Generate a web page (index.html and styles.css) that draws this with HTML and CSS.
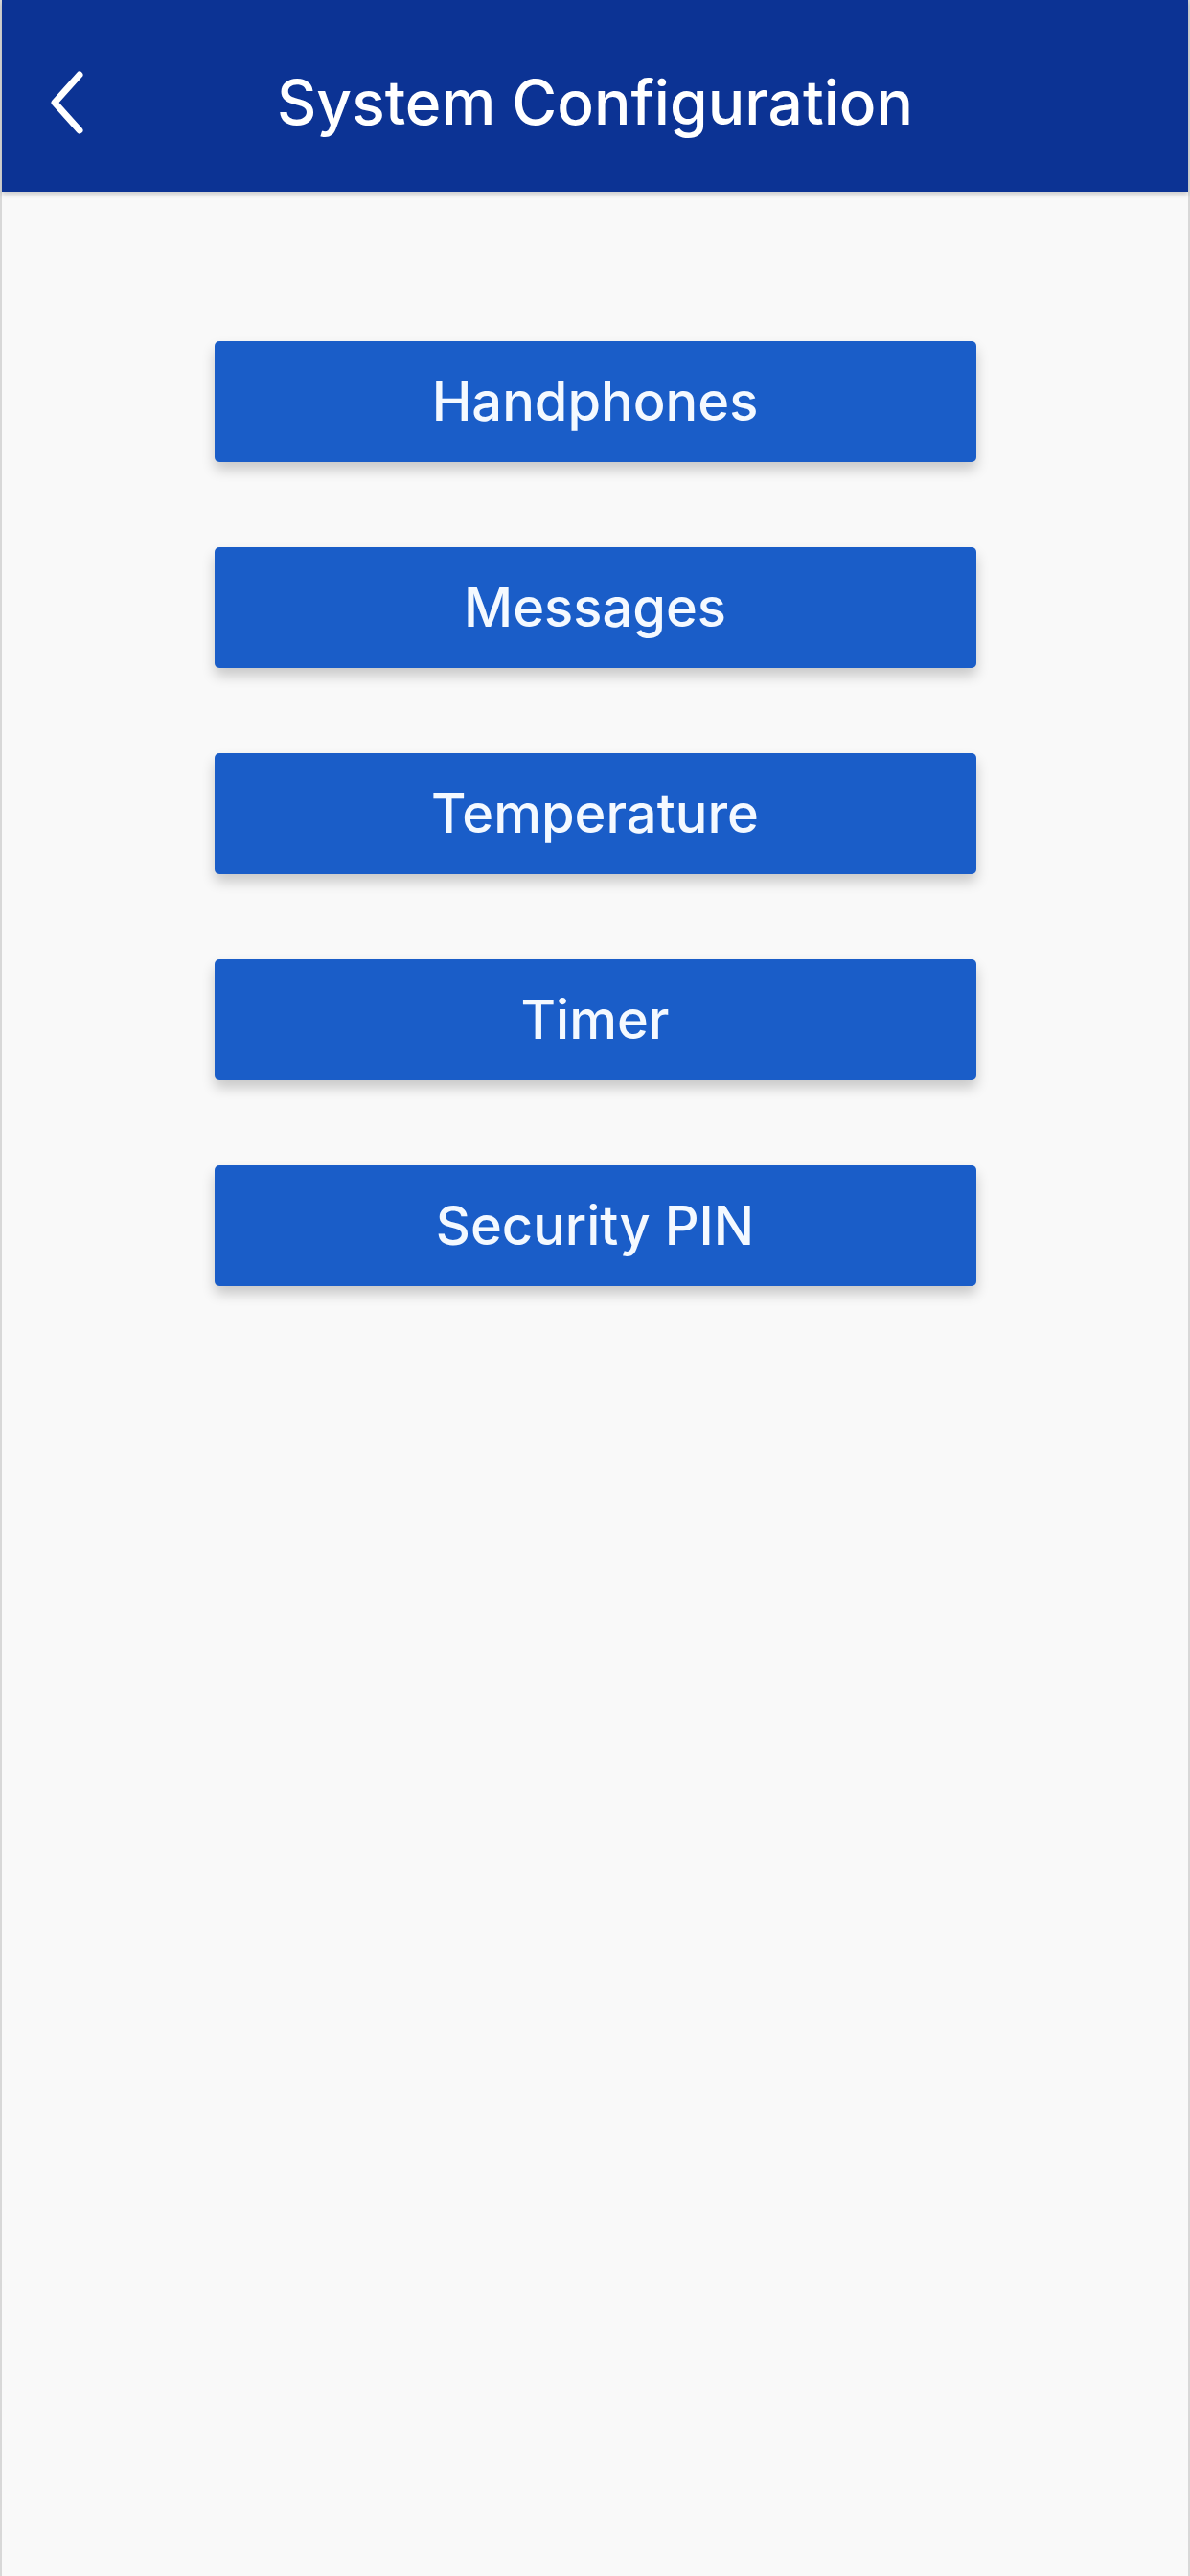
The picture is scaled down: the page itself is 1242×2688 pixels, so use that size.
FILE: index.html
```html
<!DOCTYPE html>
<html lang="en">

<head>
    <meta charset="UTF-8">
    <meta name="viewport" content="width=device-width, initial-scale=1.0">
    <title>System Configuration</title>
    <link rel="stylesheet" href="styles.css">
</head>

<body>
    <div class="screen">
        <header class="topbar">
            <button class="back" aria-label="Back">
                <svg width="40" height="70" viewBox="0 0 40 70">
                    <path d="M33 6 L7 35 L33 64" fill="none" stroke="#fff" stroke-width="7" stroke-linecap="round" stroke-linejoin="round" />
                </svg>
            </button>
            <h1 class="title">System Configuration</h1>
        </header>

        <nav class="menu">
            <button class="menu-btn">Handphones</button>
            <button class="menu-btn">Messages</button>
            <button class="menu-btn">Temperature</button>
            <button class="menu-btn">Timer</button>
            <button class="menu-btn">Security PIN</button>
        </nav>
    </div>
</body>

</html>
```

FILE: styles.css
```css
body {
    margin: 0;
    padding: 0;
    font-family: Inter, Roboto, "Noto Sans", sans-serif;
    background-color: #f9f9f9;
}

.screen {
    min-height: 2688px;
    box-sizing: border-box;
    border-left: 2px solid #d8d8d8;
    border-right: 2px solid #d8d8d8;
    background-color: #f9f9f9;
}

.topbar {
    position: relative;
    height: 200px;
    box-sizing: border-box;
    padding-top: 12px;
    display: flex;
    align-items: center;
    justify-content: center;
    background-color: #0c3394;
    box-shadow: 0 3px 5px rgba(0, 0, 0, 0.18);
}

.back {
    position: absolute;
    left: 48px;
    top: 72px;
    padding: 0;
    border: none;
    background: none;
    display: flex;
}

.title {
    margin: 0;
    color: #fff;
    font-size: 64px;
    font-weight: 500;
}

.menu {
    display: flex;
    flex-direction: column;
    align-items: center;
    gap: 89px;
    padding-top: 156px;
}

.menu-btn {
    width: 795px;
    height: 126px;
    border: none;
    border-radius: 5px;
    background-color: #1a5dc8;
    color: #f4f9ff;
    font-family: inherit;
    font-size: 56px;
    font-weight: 500;
    box-shadow: 0 8px 14px rgba(0, 0, 0, 0.2);
}
```
